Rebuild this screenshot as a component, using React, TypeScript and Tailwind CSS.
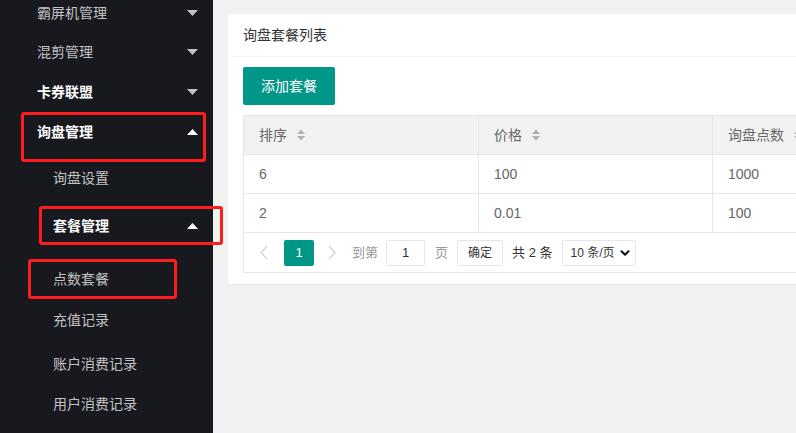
import { ChevronDown } from 'lucide-react';

type NavItem = {
  label: string;
  sub?: boolean;
  active?: boolean;
  arrow?: 'up' | 'down';
  h: string;
};

const navItems: NavItem[] = [
  { label: '霸屏机管理', arrow: 'down', h: 'h-[39px]' },
  { label: '混剪管理', arrow: 'down', h: 'h-[40px]' },
  { label: '卡券联盟', arrow: 'down', active: true, h: 'h-[40px]' },
  { label: '询盘管理', arrow: 'up', active: true, h: 'h-[46px]' },
  { label: '询盘设置', sub: true, h: 'h-[48px]' },
  { label: '套餐管理', sub: true, arrow: 'up', active: true, h: 'h-[53px]' },
  { label: '点数套餐', sub: true, h: 'h-[41px]' },
  { label: '充值记录', sub: true, h: 'h-[44px]' },
  { label: '账户消费记录', sub: true, h: 'h-[40px]' },
  { label: '用户消费记录', sub: true, h: 'h-[40px]' },
];

const rows = [
  { sort: '6', price: '100', points: '1000' },
  { sort: '2', price: '0.01', points: '100' },
];

function Caret({ dir }: { dir: 'up' | 'down' }) {
  return (
    <svg width="11" height="6" viewBox="0 0 11 6" className="shrink-0">
      {dir === 'up' ? (
        <path d="M0 6 L5.5 0 L11 6 Z" fill="#ffffff" />
      ) : (
        <path d="M0 0 L5.5 6 L11 0 Z" fill="#c2c2c2" />
      )}
    </svg>
  );
}

function SortIcon() {
  return (
    <svg width="10" height="14" viewBox="0 0 10 14" className="ml-[9px] shrink-0">
      <path d="M1 6 L5 1.5 L9 6 Z" fill="#b2b2b2" />
      <path d="M1 8 L5 12.5 L9 8 Z" fill="#b2b2b2" />
    </svg>
  );
}

function Sidebar() {
  return (
    <aside className="w-[213px] shrink-0 bg-[#18191f]">
      <div className="mt-[3px]">
        {navItems.map((item) => (
          <div key={item.label} className={item.h}>
            <div
              className={`flex h-5 items-center justify-between pr-[15px] text-[14px] leading-5 ${
                item.sub ? 'pl-[53px]' : 'pl-[37px]'
              } ${item.active ? 'font-bold text-white' : 'text-[#c2c2c2]'}`}
            >
              <span>{item.label}</span>
              {item.arrow && <Caret dir={item.arrow} />}
            </div>
          </div>
        ))}
      </div>
    </aside>
  );
}

function Pagination() {
  return (
    <div className="flex h-[39px] items-center whitespace-nowrap pl-[15px] text-[13px] text-[#333]">
      <span className="flex w-[20px] shrink-0 items-center">
        <svg width="9" height="15" viewBox="0 0 9 15">
          <path d="M8 1 L2 7.5 L8 14" fill="none" stroke="#d2d2d2" strokeWidth="1.3" />
        </svg>
      </span>
      <span className="ml-[5px] flex h-[26px] w-[30px] shrink-0 items-center justify-center rounded-[2px] bg-[#009688] text-white">
        1
      </span>
      <span className="ml-[14px] flex w-[20px] shrink-0 items-center">
        <svg width="9" height="15" viewBox="0 0 9 15">
          <path d="M1 1 L7 7.5 L1 14" fill="none" stroke="#d2d2d2" strokeWidth="1.3" />
        </svg>
      </span>
      <span className="ml-[4px] text-[#999]">到第</span>
      <span className="ml-[8px] flex h-[26px] w-[39px] shrink-0 items-center justify-center rounded-[2px] border border-[#e6e6e6] bg-white">
        1
      </span>
      <span className="ml-[10px] text-[#999]">页</span>
      <span className="ml-[9px] flex h-[26px] w-[46px] shrink-0 items-center justify-center rounded-[2px] border border-[#e6e6e6] bg-white text-[12px] text-[#333]">
        确定
      </span>
      <span className="ml-[9px]">共 2 条</span>
      <span className="ml-[9px] flex h-[26px] w-[74px] shrink-0 items-center justify-between rounded-[2px] border border-[#e6e6e6] bg-white pl-[8px] pr-[3px] text-[12px] text-[#333]">
        <span>10 条/页</span>
        <ChevronDown size={14} strokeWidth={3.5} color="#111" />
      </span>
    </div>
  );
}

function Card() {
  return (
    <div className="w-[966px] shrink-0 rounded-[2px] bg-white shadow-[0_1px_2px_0_rgba(0,0,0,0.05)]">
      <div className="flex h-[43px] items-center border-b border-[#f6f6f6] px-[15px] text-[14px] text-[#333]">
        询盘套餐列表
      </div>
      <div className="px-[15px] pb-[11px] pt-[10px]">
        <button className="h-[38px] rounded-[2px] bg-[#009688] px-[18px] text-[14px] text-white">
          添加套餐
        </button>
        <div className="mt-[10px] border border-[#e6e6e6]">
          <div className="grid grid-cols-[234px_234px_234px_234px] bg-[#f2f2f2] text-[14px] text-[#666]">
            {['排序', '价格', '询盘点数', '操作'].map((h, i) => (
              <div
                key={h}
                className={`flex h-[38px] items-center whitespace-nowrap px-[15px] ${i > 0 ? 'border-l border-[#e6e6e6]' : ''}`}
              >
                {h}
                {i < 3 && <SortIcon />}
              </div>
            ))}
          </div>
          {rows.map((r) => (
            <div
              key={r.sort + r.price}
              className="grid grid-cols-[234px_234px_234px_234px] border-t border-[#e6e6e6] text-[14px] text-[#666]"
            >
              <div className="flex h-[38px] items-center px-[15px]">{r.sort}</div>
              <div className="flex h-[38px] items-center border-l border-[#e6e6e6] px-[15px]">{r.price}</div>
              <div className="flex h-[38px] items-center border-l border-[#e6e6e6] px-[15px]">{r.points}</div>
              <div className="flex h-[38px] items-center border-l border-[#e6e6e6] px-[15px]" />
            </div>
          ))}
          <div className="border-t border-[#e6e6e6]">
            <Pagination />
          </div>
        </div>
      </div>
    </div>
  );
}

export default function App() {
  return (
    <div
      className="relative flex h-[433px] w-[796px] overflow-hidden bg-[#f2f2f2]"
      style={{ fontFamily: '"Liberation Sans", "Noto Sans CJK SC", sans-serif' }}
    >
      <Sidebar />
      <main className="flex-1 overflow-hidden pl-[15px] pt-[14px]">
        <Card />
      </main>

      {/* red annotation frames */}
      <div className="pointer-events-none absolute left-[21px] top-[112px] h-[50px] w-[185px] rounded-[3px] border-[3px] border-[#ff1c1c]" />
      <div className="pointer-events-none absolute left-[39px] top-[206px] h-[39px] w-[184px] rounded-[3px] border-[3px] border-[#ff1c1c]" />
      <div className="pointer-events-none absolute left-[28px] top-[259px] h-[40px] w-[149px] rounded-[3px] border-[3px] border-[#ff1c1c]" />
    </div>
  );
}
